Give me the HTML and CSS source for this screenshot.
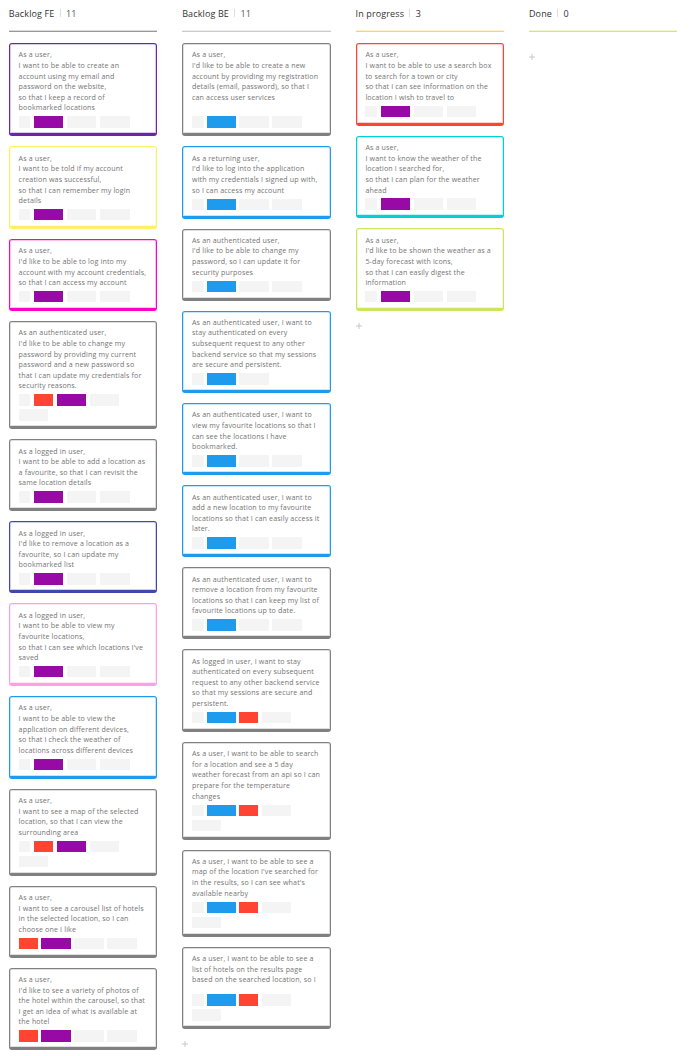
FILE: index.html
```html
<!DOCTYPE html>
<html lang="en">
<head>
<meta charset="utf-8">
<title>Kanban board</title>
<link rel="stylesheet" href="styles.css">
</head>
<body>
<main class="board">
<section class="column">
<header class="head gray-line"><span>Backlog FE</span><i class="sep"></i><span class="muted">11</span></header>
<article class="card violet"><p>As a user,<br>I want to be able to create an<br>account using my email and<br>password on the website,<br>so that I keep a record of<br>bookmarked locations</p><div class="tags"><i class="s"></i><i class="p"></i><i></i><i></i></div></article>
<article class="card yellow"><p>As a user,<br>I want to be told if my account<br>creation was successful,<br>so that I can remember my login<br>details</p><div class="tags"><i class="s"></i><i class="p"></i><i></i><i></i></div></article>
<article class="card magenta"><p>As a user,<br>I'd like to be able to log into my<br>account with my account credentials,<br>so that I can access my account</p><div class="tags"><i class="s"></i><i class="p"></i><i></i><i></i></div></article>
<article class="card"><p>As an authenticated user,<br>I'd like to be able to change my<br>password by providing my current<br>password and a new password so<br>that I can update my credentials for<br>security reasons.</p><div class="tags"><i class="s"></i><i class="r"></i><i class="p"></i><i></i><i></i></div></article>
<article class="card"><p>As a logged in user,<br>I want to be able to add a location as<br>a favourite, so that I can revisit the<br>same location details</p><div class="tags"><i class="s"></i><i class="p"></i><i></i><i></i></div></article>
<article class="card navy"><p>As a logged in user,<br>I'd like to remove a location as a<br>favourite, so I can update my<br>bookmarked list</p><div class="tags"><i class="s"></i><i class="p"></i><i></i><i></i></div></article>
<article class="card pink"><p>As a logged in user,<br>I want to be able to view my<br>favourite locations,<br>so that I can see which locations I've<br>saved</p><div class="tags"><i class="s"></i><i class="p"></i><i></i><i></i></div></article>
<article class="card blue"><p>As a user,<br>I want to be able to view the<br>application on different devices,<br>so that I check the weather of<br>locations across different devices</p><div class="tags"><i class="s"></i><i class="p"></i><i></i><i></i></div></article>
<article class="card"><p>As a user,<br>I want to see a map of the selected<br>location, so that I can view the<br>surrounding area</p><div class="tags"><i class="s"></i><i class="r"></i><i class="p"></i><i></i><i></i></div></article>
<article class="card"><p>As a user,<br>I want to see a carousel list of hotels<br>in the selected location, so I can<br>choose one I like</p><div class="tags"><i class="r"></i><i class="p"></i><i></i><i></i></div></article>
<article class="card"><p>As a user,<br>I'd like to see a variety of photos of<br>the hotel within the carousel, so that<br>I get an idea of what is available at<br>the hotel</p><div class="tags"><i class="r"></i><i class="p"></i><i></i><i></i></div></article>
</section>

<section class="column">
<header class="head light-line"><span>Backlog BE</span><i class="sep"></i><span class="muted">11</span></header>
<article class="card"><p class="six">As a user,<br>I'd like to be able to create a new<br>account by providing my registration<br>details (email, password), so that I<br>can access user services</p><div class="tags"><i class="s"></i><i class="b"></i><i></i><i></i></div></article>
<article class="card blue"><p>As a returning user,<br>I'd like to log into the application<br>with my credentials I signed up with,<br>so I can access my account</p><div class="tags"><i class="s"></i><i class="b"></i><i></i><i></i></div></article>
<article class="card"><p>As an authenticated user,<br>I'd like to be able to change my<br>password, so I can update it for<br>security purposes</p><div class="tags"><i class="s"></i><i class="b"></i><i></i><i></i></div></article>
<article class="card blue"><p>As an authenticated user, I want to<br>stay authenticated on every<br>subsequent request to any other<br>backend service so that my sessions<br>are secure and persistent.</p><div class="tags"><i class="s"></i><i class="b"></i><i></i></div></article>
<article class="card blue"><p>As an authenticated user, I want to<br>view my favourite locations so that I<br>can see the locations I have<br>bookmarked.</p><div class="tags"><i class="s"></i><i class="b"></i><i></i><i></i></div></article>
<article class="card blue"><p>As an authenticated user, I want to<br>add a new location to my favourite<br>locations so that I can easily access it<br>later.</p><div class="tags"><i class="s"></i><i class="b"></i><i></i><i></i></div></article>
<article class="card"><p>As an authenticated user, I want to<br>remove a location from my favourite<br>locations so that I can keep my list of<br>favourite locations up to date.</p><div class="tags"><i class="s"></i><i class="b"></i><i></i><i></i></div></article>
<article class="card"><p>As logged in user, I want to stay<br>authenticated on every subsequent<br>request to any other backend service<br>so that my sessions are secure and<br>persistent.</p><div class="tags"><i class="s"></i><i class="b"></i><i class="r"></i><i></i></div></article>
<article class="card"><p>As a user, I want to be able to search<br>for a location and see a 5 day<br>weather forecast from an api so I can<br>prepare for the temperature<br>changes</p><div class="tags"><i class="s"></i><i class="b"></i><i class="r"></i><i></i><i></i></div></article>
<article class="card"><p>As a user, I want to be able to see a<br>map of the location I've searched for<br>in the results, so I can see what's<br>available nearby</p><div class="tags"><i class="s"></i><i class="b"></i><i class="r"></i><i></i><i></i></div></article>
<article class="card"><p class="short">As a user, I want to be able to see a<br>list of hotels on the results page<br>based on the searched location, so I</p><div class="tags"><i class="s"></i><i class="b"></i><i class="r"></i><i></i><i></i></div></article>
<svg class="plus" viewBox="0 0 6 6"><path d="M3 0v6M0 3h6"/></svg>
</section>

<section class="column">
<header class="head amber-line"><span>In progress</span><i class="sep"></i><span>3</span></header>
<article class="card red"><p>As a user,<br>I want to be able to use a search box<br>to search for a town or city<br>so that I can see information on the<br>location I wish to travel to</p><div class="tags"><i class="s"></i><i class="p"></i><i></i><i></i></div></article>
<article class="card cyan"><p>As a user,<br>I want to know the weather of the<br>location I searched for,<br>so that I can plan for the weather<br>ahead</p><div class="tags"><i class="s"></i><i class="p"></i><i></i><i></i></div></article>
<article class="card lime"><p>As a user,<br>I'd like to be shown the weather as a<br>5-day forecast with icons,<br>so that I can easily digest the<br>information</p><div class="tags"><i class="s"></i><i class="p"></i><i></i><i></i></div></article>
<svg class="plus" viewBox="0 0 6 6"><path d="M3 0v6M0 3h6"/></svg>
</section>

<section class="column">
<header class="head lime-line"><span>Done</span><i class="sep"></i><span>0</span></header>
<svg class="plus empty" viewBox="0 0 6 6"><path d="M3 0v6M0 3h6"/></svg>
</section>
</main>
</body>
</html>
```
FILE: styles.css
```css
* { box-sizing: border-box; }
html, body { margin: 0; height: 1056px; overflow: hidden; background: #fff; }
body { font-family: "Open Sans", sans-serif; }
.board { display: flex; gap: 24.9px; padding-left: 8.8px; }
.column { flex: none; width: 148.5px; }
.head {
  --l: #999;
  display: flex; align-items: center; height: 31.5px; padding: 0 0 4px;
  margin-bottom: 11.7px; border-bottom: 1px solid var(--l);
  box-shadow: 0 -1px 0 color-mix(in srgb, var(--l) 35%, transparent) inset;
  font-size: 9px; letter-spacing: 0.12px; color: #333; white-space: nowrap;
}
.sep { width: 1px; height: 8px; margin: 0 5.3px; background: #ddd; }
.muted { color: #555; }
.light-line { --l: #ccc; }
.amber-line { --l: #fcd46b; }
.lime-line { --l: #d3e87c; }
.card {
  --c: #808080;
  margin-bottom: 10px; padding: 5.3px 8px 5.7px 8.8px;
  border: 1px solid var(--c); border-bottom-width: 3px; border-radius: 3px;
  box-shadow: inset 0 0 0 1px color-mix(in srgb, var(--c) 25%, transparent);
}
.card p {
  margin: 0 0 3.4px; font-size: 7.1px; line-height: 10.6px;
  letter-spacing: 0.145px; color: #747474; white-space: nowrap;
}
.card .six { height: 63.6px; }
.card .short { height: 38px; }
.violet { --c: #6826ab; }
.yellow { --c: #fff06a; }
.magenta { --c: #ff00c8; }
.navy { --c: #4048ae; }
.pink { --c: #ff9fe8; }
.blue { --c: #1e9bec; }
.red { --c: #ff4433; }
.cyan { --c: #00cfd5; }
.lime { --c: #cbe65e; }
.tags { display: flex; flex-wrap: wrap; gap: 3.7px; width: 121px; }
.tags i { width: 29.4px; height: 11.3px; background: #f4f4f4; }
.tags .s { width: 11.7px; }
.tags .p { background: #980aa5; }
.tags .b { width: 28.2px; background: #1e9bec; }
.tags .r { width: 19px; background: #ff4433; }
.plus { display: block; width: 6px; height: 6px; }
.card + .plus { margin-top: 12px; }
.plus path { stroke: #c8c8c8; stroke-width: 1; }
.head + .empty { margin-top: 22.3px; }
```
